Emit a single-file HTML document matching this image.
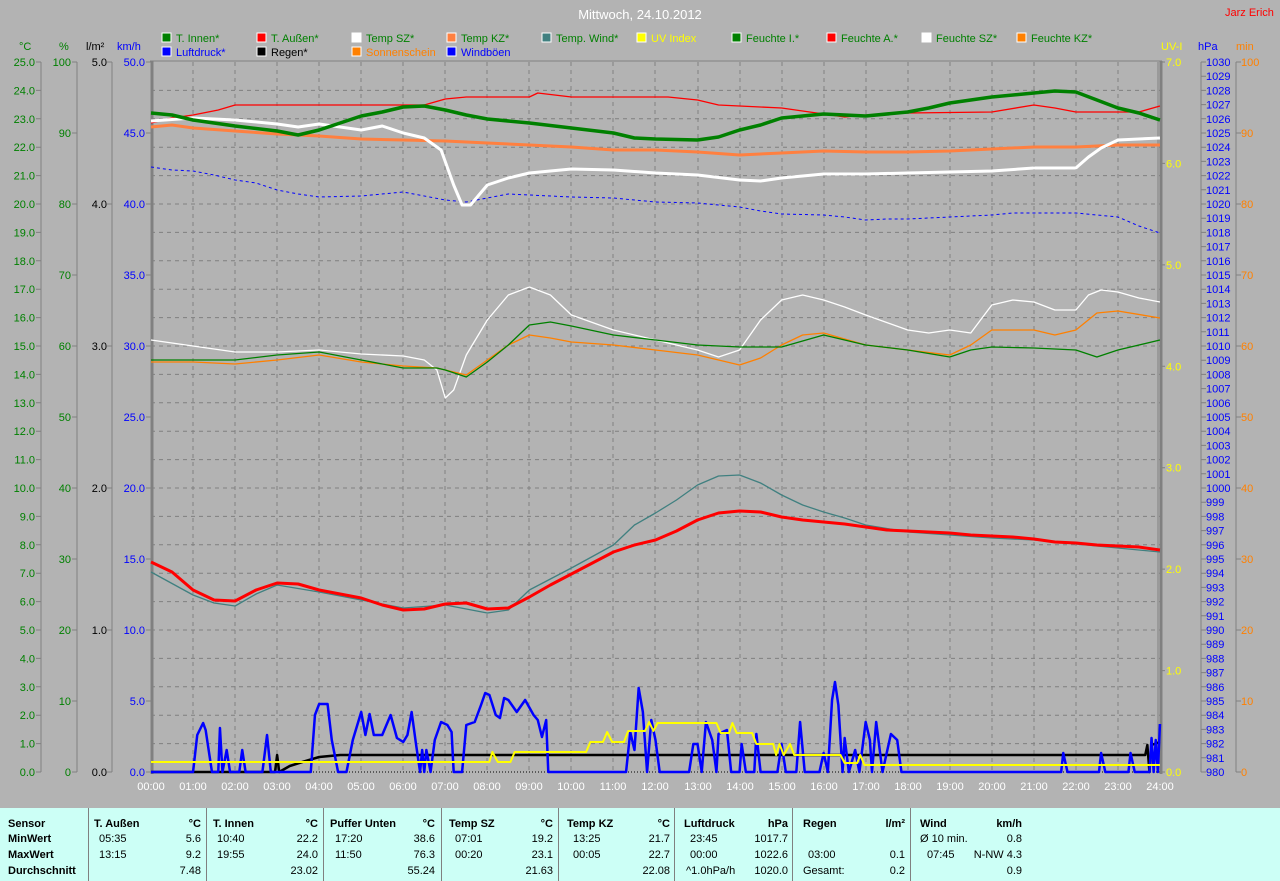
<!DOCTYPE html>
<html><head><meta charset="utf-8"><style>
html,body{margin:0;padding:0;background:#b3b3b3;width:1280px;height:881px;overflow:hidden}
svg{display:block}
text{font-family:"Liberation Sans",sans-serif;font-size:11px}
.t text{font-family:"Liberation Sans Narrow","Liberation Sans",sans-serif;font-size:11px}
</style></head><body>
<svg width="1280" height="881" xmlns="http://www.w3.org/2000/svg">
<rect width="1280" height="881" fill="#b3b3b3"/>
<text x="640" y="19" fill="#fff" font-size="13" text-anchor="middle" style="font-size:13px">Mittwoch, 24.10.2012</text>
<text x="1225" y="16" fill="#f00">Jarz Erich</text>
<!-- legend -->
<g stroke="#fff" stroke-width="1">
<rect x="162" y="33" width="9" height="9" fill="#008000"/><rect x="257" y="33" width="9" height="9" fill="#f00"/><rect x="352" y="33" width="9" height="9" fill="#fff"/><rect x="447" y="33" width="9" height="9" fill="#ff8040"/><rect x="542" y="33" width="9" height="9" fill="#408080"/><rect x="637" y="33" width="9" height="9" fill="#ff0"/><rect x="732" y="33" width="9" height="9" fill="#008000"/><rect x="827" y="33" width="9" height="9" fill="#f00"/><rect x="922" y="33" width="9" height="9" fill="#fff"/><rect x="1017" y="33" width="9" height="9" fill="#ff8000"/>
<rect x="162" y="47" width="9" height="9" fill="#00f"/><rect x="257" y="47" width="9" height="9" fill="#000"/><rect x="352" y="47" width="9" height="9" fill="#ff8000"/><rect x="447" y="47" width="9" height="9" fill="#00f"/>
</g>
<g fill="#008000">
<text x="176" y="42">T. Innen*</text><text x="271" y="42">T. Außen*</text><text x="366" y="42">Temp SZ*</text><text x="461" y="42">Temp KZ*</text><text x="556" y="42">Temp. Wind*</text><text x="651" y="42" fill="#ff0">UV Index</text><text x="746" y="42">Feuchte I.*</text><text x="841" y="42">Feuchte A.*</text><text x="936" y="42">Feuchte SZ*</text><text x="1031" y="42">Feuchte KZ*</text>
</g>
<text x="176" y="56" fill="#00f">Luftdruck*</text><text x="271" y="56" fill="#000">Regen*</text><text x="366" y="56" fill="#ff8000">Sonnenschein</text><text x="461" y="56" fill="#00f">Windböen</text>
<!-- unit headers -->
<text x="19" y="50" fill="#008000">°C</text><text x="59" y="50" fill="#008000">%</text><text x="86" y="50" fill="#000">l/m²</text><text x="117" y="50" fill="#00f">km/h</text>
<text x="1161" y="50" fill="#ff0">UV-I</text><text x="1198" y="50" fill="#00f">hPa</text><text x="1236" y="50" fill="#ff8000">min</text>
<!-- grid -->
<g stroke="#808080" stroke-dasharray="4,4" stroke-width="1">
<path d="M193 62V772M235 62V772M277 62V772M319 62V772M361 62V772M403 62V772M445 62V772M487 62V772M529 62V772M571 62V772M613 62V772M655 62V772M698 62V772M740 62V772M782 62V772M824 62V772M866 62V772M908 62V772M950 62V772M992 62V772M1034 62V772M1076 62V772M1118 62V772"/>
<path d="M151 90.4H1160M151 118.8H1160M151 147.2H1160M151 175.6H1160M151 204H1160M151 232.4H1160M151 260.8H1160M151 289.2H1160M151 317.6H1160M151 346H1160M151 374.4H1160M151 402.8H1160M151 431.2H1160M151 459.6H1160M151 488H1160M151 516.4H1160M151 544.8H1160M151 573.2H1160M151 601.6H1160M151 630H1160M151 658.4H1160M151 686.8H1160M151 715.2H1160M151 743.6H1160"/>
</g>
<path d="M151 772H1160" stroke="#000" stroke-dasharray="1,2"/>
<g stroke="#808080" fill="none">
<path d="M151 61V774M150 61H1162M1158 62V772" stroke-width="1"/>
<path d="M152 61V774M1161 61V774" stroke-width="3"/>
<path d="M41 62V772M77 62V772M112 62V772M1201 62V772M1236 62V772" stroke-width="1"/>
<path d="M36 62h5M36 90.4h5M36 118.8h5M36 147.2h5M36 175.6h5M36 204h5M36 232.4h5M36 260.8h5M36 289.2h5M36 317.6h5M36 346h5M36 374.4h5M36 402.8h5M36 431.2h5M36 459.6h5M36 488h5M36 516.4h5M36 544.8h5M36 573.2h5M36 601.6h5M36 630h5M36 658.4h5M36 686.8h5M36 715.2h5M36 743.6h5M36 772h5"/>
<path d="M72 62h5M72 133h5M72 204h5M72 275h5M72 346h5M72 417h5M72 488h5M72 559h5M72 630h5M72 701h5M72 772h5"/>
<path d="M107 62h5M107 204h5M107 346h5M107 488h5M107 630h5M107 772h5"/>
<path d="M146 62h5M146 133h5M146 204h5M146 275h5M146 346h5M146 417h5M146 488h5M146 559h5M146 630h5M146 701h5M146 772h5"/>
<path d="M1160 62h5M1160 163.4h5M1160 264.9h5M1160 366.3h5M1160 467.7h5M1160 569.1h5M1160 670.6h5M1160 772h5"/>
<path d="M1236 62h5M1236 133h5M1236 204h5M1236 275h5M1236 346h5M1236 417h5M1236 488h5M1236 559h5M1236 630h5M1236 701h5M1236 772h5"/>
<path d="M1201 62h5M1201 76.2h5M1201 90.4h5M1201 104.6h5M1201 118.8h5M1201 133h5M1201 147.2h5M1201 161.4h5M1201 175.6h5M1201 189.8h5M1201 204h5M1201 218.2h5M1201 232.4h5M1201 246.6h5M1201 260.8h5M1201 275h5M1201 289.2h5M1201 303.4h5M1201 317.6h5M1201 331.8h5M1201 346h5M1201 360.2h5M1201 374.4h5M1201 388.6h5M1201 402.8h5M1201 417h5M1201 431.2h5M1201 445.4h5M1201 459.6h5M1201 473.8h5M1201 488h5M1201 502.2h5M1201 516.4h5M1201 530.6h5M1201 544.8h5M1201 559h5M1201 573.2h5M1201 587.4h5M1201 601.6h5M1201 615.8h5M1201 630h5M1201 644.2h5M1201 658.4h5M1201 672.6h5M1201 686.8h5M1201 701h5M1201 715.2h5M1201 729.4h5M1201 743.6h5M1201 757.8h5M1201 772h5"/>
</g>
<!-- axis labels -->
<g fill="#008000" text-anchor="end">
<text x="35" y="66">25.0</text><text x="35" y="94.4">24.0</text><text x="35" y="122.8">23.0</text><text x="35" y="151.2">22.0</text><text x="35" y="179.6">21.0</text><text x="35" y="208">20.0</text><text x="35" y="236.4">19.0</text><text x="35" y="264.8">18.0</text><text x="35" y="293.2">17.0</text><text x="35" y="321.6">16.0</text><text x="35" y="350">15.0</text><text x="35" y="378.4">14.0</text><text x="35" y="406.8">13.0</text><text x="35" y="435.2">12.0</text><text x="35" y="463.6">11.0</text><text x="35" y="492">10.0</text><text x="35" y="520.4">9.0</text><text x="35" y="548.8">8.0</text><text x="35" y="577.2">7.0</text><text x="35" y="605.6">6.0</text><text x="35" y="634">5.0</text><text x="35" y="662.4">4.0</text><text x="35" y="690.8">3.0</text><text x="35" y="719.2">2.0</text><text x="35" y="747.6">1.0</text><text x="35" y="776">0.0</text>
<text x="71" y="66">100</text><text x="71" y="137">90</text><text x="71" y="208">80</text><text x="71" y="279">70</text><text x="71" y="350">60</text><text x="71" y="421">50</text><text x="71" y="492">40</text><text x="71" y="563">30</text><text x="71" y="634">20</text><text x="71" y="705">10</text><text x="71" y="776">0</text>
</g>
<g fill="#000" text-anchor="end">
<text x="107" y="66">5.0</text><text x="107" y="208">4.0</text><text x="107" y="350">3.0</text><text x="107" y="492">2.0</text><text x="107" y="634">1.0</text><text x="107" y="776">0.0</text>
</g>
<g fill="#00f" text-anchor="end">
<text x="145" y="66">50.0</text><text x="145" y="137">45.0</text><text x="145" y="208">40.0</text><text x="145" y="279">35.0</text><text x="145" y="350">30.0</text><text x="145" y="421">25.0</text><text x="145" y="492">20.0</text><text x="145" y="563">15.0</text><text x="145" y="634">10.0</text><text x="145" y="705">5.0</text><text x="145" y="776">0.0</text>
</g>
<g fill="#ff0">
<text x="1166" y="66">7.0</text><text x="1166" y="167.4">6.0</text><text x="1166" y="268.9">5.0</text><text x="1166" y="370.3">4.0</text><text x="1166" y="471.7">3.0</text><text x="1166" y="573.1">2.0</text><text x="1166" y="674.6">1.0</text><text x="1166" y="776">0.0</text>
</g>
<g fill="#ff8000">
<text x="1241" y="66">100</text><text x="1241" y="137">90</text><text x="1241" y="208">80</text><text x="1241" y="279">70</text><text x="1241" y="350">60</text><text x="1241" y="421">50</text><text x="1241" y="492">40</text><text x="1241" y="563">30</text><text x="1241" y="634">20</text><text x="1241" y="705">10</text><text x="1241" y="776">0</text>
</g>
<g fill="#00f" style="font-size:10.5px">
<text x="1206" y="66">1030</text><text x="1206" y="80.2">1029</text><text x="1206" y="94.4">1028</text><text x="1206" y="108.6">1027</text><text x="1206" y="122.8">1026</text><text x="1206" y="137">1025</text><text x="1206" y="151.2">1024</text><text x="1206" y="165.4">1023</text><text x="1206" y="179.6">1022</text><text x="1206" y="193.8">1021</text><text x="1206" y="208">1020</text><text x="1206" y="222.2">1019</text><text x="1206" y="236.4">1018</text><text x="1206" y="250.6">1017</text><text x="1206" y="264.8">1016</text><text x="1206" y="279">1015</text><text x="1206" y="293.2">1014</text><text x="1206" y="307.4">1013</text><text x="1206" y="321.6">1012</text><text x="1206" y="335.8">1011</text><text x="1206" y="350">1010</text><text x="1206" y="364.2">1009</text><text x="1206" y="378.4">1008</text><text x="1206" y="392.6">1007</text><text x="1206" y="406.8">1006</text><text x="1206" y="421">1005</text><text x="1206" y="435.2">1004</text><text x="1206" y="449.4">1003</text><text x="1206" y="463.6">1002</text><text x="1206" y="477.8">1001</text><text x="1206" y="492">1000</text><text x="1206" y="506.2">999</text><text x="1206" y="520.4">998</text><text x="1206" y="534.6">997</text><text x="1206" y="548.8">996</text><text x="1206" y="563">995</text><text x="1206" y="577.2">994</text><text x="1206" y="591.4">993</text><text x="1206" y="605.6">992</text><text x="1206" y="619.8">991</text><text x="1206" y="634">990</text><text x="1206" y="648.2">989</text><text x="1206" y="662.4">988</text><text x="1206" y="676.6">987</text><text x="1206" y="690.8">986</text><text x="1206" y="705">985</text><text x="1206" y="719.2">984</text><text x="1206" y="733.4">983</text><text x="1206" y="747.6">982</text><text x="1206" y="761.8">981</text><text x="1206" y="776">980</text>
</g>
<!-- hour labels -->
<g fill="#fff" text-anchor="middle" style="font-size:10.5px">
<text x="151" y="790">00:00</text><text x="193" y="790">01:00</text><text x="235" y="790">02:00</text><text x="277" y="790">03:00</text><text x="319" y="790">04:00</text><text x="361" y="790">05:00</text><text x="403" y="790">06:00</text><text x="445" y="790">07:00</text><text x="487" y="790">08:00</text><text x="529" y="790">09:00</text><text x="571" y="790">10:00</text><text x="613" y="790">11:00</text><text x="655" y="790">12:00</text><text x="698" y="790">13:00</text><text x="740" y="790">14:00</text><text x="782" y="790">15:00</text><text x="824" y="790">16:00</text><text x="866" y="790">17:00</text><text x="908" y="790">18:00</text><text x="950" y="790">19:00</text><text x="992" y="790">20:00</text><text x="1034" y="790">21:00</text><text x="1076" y="790">22:00</text><text x="1118" y="790">23:00</text><text x="1160" y="790">24:00</text>
</g>
<!-- data -->
<g transform="translate(151,0) scale(42.04,1)" fill="none" stroke-linejoin="round">
<polyline vector-effect="non-scaling-stroke" stroke="#00f" stroke-width="1" stroke-dasharray="3,3" points="0,167 0.5,170 1,171 1.5,175 2,180 2.5,183 3,190 3.5,194 4,197 5,196 6,192 7,200 7.5,202 8,198 8.5,194 9,195 10,197 11,198 12,202 13,203 14,207 14.5,211 15,214 16,215 16.5,217 17,220 17.5,219 18,219 19,217 20,215 20.5,213 21,213 22,213 23,217 23.5,226 24,233"/>
<polyline vector-effect="non-scaling-stroke" stroke="#f00" stroke-width="1.3" points="0,123 0.5,118 1,115 1.6,110 2,105 6.5,105 7,99 7.5,97 9,97 9.2,93 9.6,95 10,97 12.3,97 13,100 13.5,105 15,108 16,114 16.5,117 17,115 18,113 20,112 21,105 21.5,108 22,112 23.5,112 24,106"/>
<polyline vector-effect="non-scaling-stroke" stroke="#ff8040" stroke-width="3" points="0,127 0.5,125 1,128 2,131 3,134 4,136 5,139 6,140 7,141 8,143 9,145 10,147 11,150 12,150 13,152 14,155 15,153 16,151 17,152 18,152 19,151 20,149 21,147 22,147 23,145 24,145"/>
<polyline vector-effect="non-scaling-stroke" stroke="#fff" stroke-width="3" points="0,121 1,118 2,120 3,124 3.5,127 4,124 5,130 5.5,126 6,133 6.5,138 6.9,150 7.2,185 7.4,205 7.6,205 8,185 8.5,178 9,173 10,169 11,170 12,173 13,175 14,180 14.5,181 15,178 16,174 17,174 18,173 20,171 21,168 22,168 22.3,157 22.6,148 23,140 24,138"/>
<polyline vector-effect="non-scaling-stroke" stroke="#008000" stroke-width="3.5" points="0,113 0.5,115 1,120 2,126 3,131 3.5,135 4,130 4.5,123 5,116 5.5,112 6,107 6.5,106 7,110 7.5,115 8,119 9,123 10,128 11,133 11.5,138 12,139 13,140 13.5,137 14,130 14.5,125 15,118 16,114 17,116 18,112 18.5,108 19,103 19.5,100 20,97 21,93 21.5,91 22,92 22.5,100 23,108 23.5,113 24,120"/>
<polyline vector-effect="non-scaling-stroke" stroke="#fff" stroke-width="1.3" points="0,340 1,346 2,352 3,352 4,350 5,354 6,356 6.5,360 6.8,370 7,398 7.2,390 7.5,355 8,320 8.5,295 9,287 9.5,295 10,315 11,330 12,340 13,350 13.5,357 14,350 14.5,320 15,300 15.5,295 16,300 16.5,307 17,315 18,330 18.5,333 19,330 19.5,333 20,305 20.5,300 21,302 21.5,310 22,310 22.3,295 22.6,290 23,292 23.5,298 24,302"/>
<polyline vector-effect="non-scaling-stroke" stroke="#ff8000" stroke-width="1.3" points="0,362 1,362 2,364 3,360 4,355 5,362 6,366 6.8,368 7.5,375 8,360 8.5,345 9,335 9.5,338 10,342 11,345 12,350 13,355 14,365 14.5,358 15,345 15.5,335 16,333 17,345 18,350 19,355 19.5,345 20,330 21,330 21.5,335 22,330 22.5,313 23,311 24,318"/>
<polyline vector-effect="non-scaling-stroke" stroke="#008000" stroke-width="1.3" points="0,360 2,360 3,355 4,352 5,360 6,368 6.8,368 7,370 7.5,377 8,362 8.5,345 9,325 9.5,322 10,326 11,335 12,340 13,345 14,347 15,347 16,335 17,345 18,350 19,357 19.5,350 20,347 21,348 22,350 22.5,357 23,350 24,340"/>
<polyline vector-effect="non-scaling-stroke" stroke="#408080" stroke-width="1.3" points="0,572 1,595 1.5,603 2,606 2.5,594 3,585 4,592 5,600 6,608 7,605 8,613 8.5,610 9,590 10,568 11,545 11.5,525 12,513 12.5,500 13,485 13.5,476 14,475 14.5,483 15,495 15.5,505 16,512 16.5,518 17,525 18,532 19,535 20,538 21,540 22,544 23,548 24,552"/>
<polyline vector-effect="non-scaling-stroke" stroke="#f00" stroke-width="3" points="0,562 0.5,572 1,590 1.5,600 2,601 2.5,590 3,583 3.5,584 4,590 4.5,594 5,598 5.5,605 6,610 6.5,609 7,604 7.5,603 8,609 8.5,608 9,597 9.5,585 10,574 10.5,563 11,552 11.5,545 12,540 12.5,531 13,520 13.5,513 14,511 14.5,512 15,517 15.5,520 16,522 16.5,524 17,527 17.5,530 18,531 18.5,532 19,533 19.5,535 20,536 20.5,537 21,539 21.5,542 22,543 22.5,545 23,546 23.5,547 24,550"/>
<polyline vector-effect="non-scaling-stroke" stroke="#000" stroke-width="2.5" points="0,772 2.95,772 3,755 3.05,772 3.3,766 3.6,762 4,757 4.5,755 23.65,755 23.7,745 23.75,772 23.8,745 24,742"/>
<polyline vector-effect="non-scaling-stroke" stroke="#00f" stroke-width="2.5" points="0,772 1,772 1.1,735 1.24,723 1.3,730 1.45,772 1.6,772 1.64,728 1.7,772 1.8,750 1.88,772 2.1,772 2.17,750 2.25,772 2.65,772 2.76,735 2.85,772 3.8,772 3.9,715 4,704 4.2,704 4.3,740 4.45,772 4.65,772 4.8,740 5,712 5.1,735 5.2,714 5.3,735 5.5,735 5.7,715 5.85,738 6,742 6.1,735 6.2,712 6.3,743 6.4,772 6.45,750 6.5,772 6.55,750 6.65,772 6.75,740 6.9,722 7.05,725 7.15,732 7.2,772 7.4,772 7.5,725 7.7,722 7.85,705 7.95,693 8.05,695 8.2,715 8.3,718 8.4,698 8.5,700 8.7,712 8.9,700 9.1,715 9.2,720 9.3,737 9.4,720 9.45,772 11.3,772 11.4,732 11.5,750 11.6,688 11.7,712 11.8,772 11.9,720 12,740 12.1,772 12.8,772 12.9,744 13,744 13.1,772 13.2,722 13.35,740 13.45,772 13.5,734 13.7,730 13.8,772 14,772 14.05,744 14.15,772 14.35,772 14.4,734 14.5,772 14.9,772 15,744 15.1,772 15.35,772 15.44,722 15.55,772 15.9,772 16,753 16.1,772 16.2,700 16.27,682 16.35,705 16.45,772 16.5,738 16.6,772 16.75,750 16.85,772 17,722 17.1,740 17.15,772 17.25,722 17.4,772 17.6,734 17.75,740 17.85,772 21.65,772 21.7,753 21.8,772 22.55,772 22.6,753 22.7,772 23.25,772 23.3,753 23.4,772 23.75,772 23.8,738 23.85,772 23.9,740 23.95,772 24,724"/>
<polyline vector-effect="non-scaling-stroke" stroke="#ff0" stroke-width="2" points="0,762 8.05,762 8.12,752 8.25,762 8.55,762 8.65,752 10.35,752 10.45,742 10.75,742 10.85,732 10.97,742 11.25,742 11.35,731 11.75,731 11.85,722 11.95,731 12.05,723 13.45,723 13.55,733 13.75,733 13.83,723 13.93,733 14.3,733 14.4,744 14.8,744 14.87,755 14.95,744 15.05,755 15.2,744 15.3,755 16.4,755 16.5,763 16.8,763 16.87,755 16.97,765 24,765"/>
</g>
<!-- table -->
<rect x="0" y="808" width="1280" height="73" fill="#ccfff6"/>
<path d="M88.5 808V881M206.5 808V881M323.5 808V881M441.5 808V881M558.5 808V881M674.5 808V881M792.5 808V881M910.5 808V881" stroke="#808080"/>
<g class="t" fill="#000">
<g font-weight="bold">
<text x="8" y="827">Sensor</text><text x="8" y="842">MinWert</text><text x="8" y="858">MaxWert</text><text x="8" y="874">Durchschnitt</text>
<text x="94" y="827">T. Außen</text><text x="213" y="827">T. Innen</text><text x="330" y="827">Puffer Unten</text><text x="449" y="827">Temp SZ</text><text x="567" y="827">Temp KZ</text><text x="684" y="827">Luftdruck</text><text x="803" y="827">Regen</text><text x="920" y="827">Wind</text>
<g text-anchor="end"><text x="201" y="827">°C</text><text x="318" y="827">°C</text><text x="435" y="827">°C</text><text x="553" y="827">°C</text><text x="670" y="827">°C</text><text x="788" y="827">hPa</text><text x="905" y="827">l/m²</text><text x="1022" y="827">km/h</text></g>
</g>
<text x="99" y="842">05:35</text><text x="217" y="842">10:40</text><text x="335" y="842">17:20</text><text x="455" y="842">07:01</text><text x="573" y="842">13:25</text><text x="690" y="842">23:45</text><text x="920" y="842">Ø 10 min.</text>
<text x="99" y="858">13:15</text><text x="217" y="858">19:55</text><text x="335" y="858">11:50</text><text x="455" y="858">00:20</text><text x="573" y="858">00:05</text><text x="690" y="858">00:00</text><text x="808" y="858">03:00</text><text x="927" y="858">07:45</text>
<text x="686" y="874">^1.0hPa/h</text><text x="803" y="874">Gesamt:</text>
<g text-anchor="end">
<text x="201" y="842">5.6</text><text x="318" y="842">22.2</text><text x="435" y="842">38.6</text><text x="553" y="842">19.2</text><text x="670" y="842">21.7</text><text x="788" y="842">1017.7</text><text x="1022" y="842">0.8</text>
<text x="201" y="858">9.2</text><text x="318" y="858">24.0</text><text x="435" y="858">76.3</text><text x="553" y="858">23.1</text><text x="670" y="858">22.7</text><text x="788" y="858">1022.6</text><text x="905" y="858">0.1</text><text x="1022" y="858">N-NW 4.3</text>
<text x="201" y="874">7.48</text><text x="318" y="874">23.02</text><text x="435" y="874">55.24</text><text x="553" y="874">21.63</text><text x="670" y="874">22.08</text><text x="788" y="874">1020.0</text><text x="905" y="874">0.2</text><text x="1022" y="874">0.9</text>
</g>
</g>
</svg>
</body></html>
